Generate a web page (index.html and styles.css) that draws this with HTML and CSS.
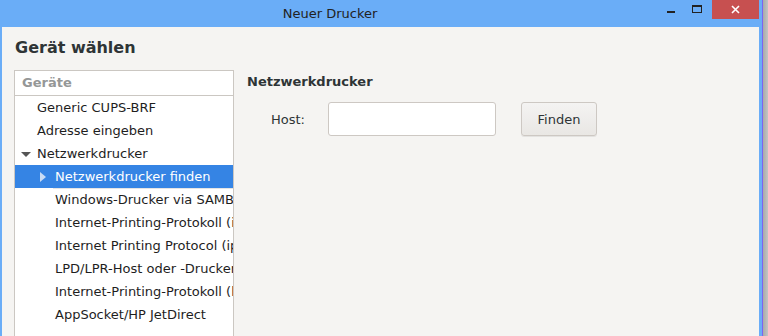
FILE: index.html
```html
<!DOCTYPE html>
<html lang="de">
<head>
  <meta charset="UTF-8" />
  <title>Neuer Drucker</title>
  <link rel="stylesheet" href="styles.css">
</head>
<body>

<div class="window">
  <div class="titlebar">
    <div class="title">Neuer Drucker</div>
    <div class="wbtn min"><span class="dash"></span></div>
    <div class="wbtn max"><span class="box"></span></div>
    <div class="wbtn close">
      <svg width="9" height="9" viewBox="0 0 9 9">
        <path d="M1 1 L8 8 M8 1 L1 8" stroke="#fff" stroke-width="1.6" fill="none"/>
      </svg>
    </div>
  </div>

  <div class="content">
    <h2>Gerät wählen</h2>

    <div class="main">
      <div class="list">
        <div class="list-head">Geräte</div>
        <div class="row lvl1">Generic CUPS-BRF</div>
        <div class="row lvl1">Adresse eingeben</div>
        <div class="row lvl1"><span class="arrow-down"></span>Netzwerkdrucker</div>
        <div class="row lvl2 selected"><span class="arrow-right"></span>Netzwerkdrucker finden</div>
        <div class="row lvl2">Windows-Drucker via SAMBA</div>
        <div class="row lvl2">Internet-Printing-Protokoll (ipps)</div>
        <div class="row lvl2">Internet Printing Protocol (ipp)</div>
        <div class="row lvl2">LPD/LPR-Host oder -Drucker</div>
        <div class="row lvl2">Internet-Printing-Protokoll (https)</div>
        <div class="row lvl2">AppSocket/HP JetDirect</div>
      </div>

      <div class="panel">
        <div class="panel-title">Netzwerkdrucker</div>
        <div class="host-row">
          <label for="host">Host:</label>
          <input type="text" id="host">
          <button>Finden</button>
        </div>
      </div>
    </div>
  </div>
</div>
<div class="edge"></div>
<div class="shade"></div>

</body>
</html>
```

FILE: styles.css
```css
body {
  margin: 0;
  height: 336px;
  overflow: hidden;
  display: flex;
  font-family: "DejaVu Sans", sans-serif;
  font-size: 13px;
  color: #2e3436;
}
.window {
  width: 757px;
  height: 336px;
  padding: 0 3px 0 2px;
  background: #6aadf7;
  display: flex;
  flex-direction: column;
}
.edge {
  width: 1px;
  background: #7b63f2;
}
.shade {
  flex: 1;
  background: linear-gradient(to right, #a9a9a9, #c4c4c4);
}
.titlebar {
  height: 27px;
  display: flex;
  margin-left: -2px;
}
.title {
  flex: 1;
  text-align: center;
  line-height: 27px;
  color: #222;
}
.wbtn {
  display: flex;
  justify-content: center;
}
.min {
  width: 22px;
}
.dash {
  width: 8px;
  height: 2px;
  margin-top: 11px;
  background: #222;
}
.max {
  width: 30px;
}
.box {
  width: 8px;
  height: 5px;
  margin-top: 5px;
  border: 1px solid #222;
  border-top-width: 2px;
}
.close {
  width: 47px;
  height: 19px;
  background: #c75050;
  align-items: center;
}
.content {
  flex: 1;
  min-height: 0;
  overflow: hidden;
  background: #f5f4f2;
  padding: 11px 12px 0 12px;
}
h2 {
  margin: 0 0 12px 1px;
  font-size: 16px;
  line-height: 20px;
  font-weight: bold;
  color: #2e3436;
}
.main {
  display: flex;
}
.list {
  width: 218px;
  height: 266px;
  border: 1px solid #cbc7c2;
  border-bottom: none;
  background: #fff;
  overflow: hidden;
  color: #1e1e1e;
}
.list-head {
  height: 24px;
  line-height: 24px;
  padding-left: 7px;
  border-bottom: 1px solid #cbc7c2;
  color: #959797;
  font-weight: bold;
}
.row {
  height: 23px;
  line-height: 23px;
  white-space: nowrap;
  position: relative;
}
.lvl1 {
  padding-left: 22px;
}
.lvl2 {
  padding-left: 40px;
}
.selected {
  background: #3584e4;
  color: #fff;
}
.selected::after {
  content: "";
  position: absolute;
  left: 38px;
  right: 0;
  bottom: -1px;
  height: 1px;
  background: #e4e4e4;
}
.arrow-down {
  position: absolute;
  left: 6px;
  top: 10px;
  border-left: 5px solid transparent;
  border-right: 5px solid transparent;
  border-top: 5px solid #555;
}
.arrow-right {
  position: absolute;
  left: 25px;
  top: 7px;
  border-top: 5px solid transparent;
  border-bottom: 5px solid transparent;
  border-left: 6px solid #c9dcf5;
}
.panel {
  flex: 1;
  padding: 2px 0 0 13px;
}
.panel-title {
  font-weight: bold;
  line-height: 20px;
}
.host-row {
  display: flex;
  align-items: center;
  margin-top: 10px;
  padding-left: 24px;
}
label {
  width: 57px;
}
input {
  box-sizing: border-box;
  width: 168px;
  height: 34px;
  border: 1px solid #cdc8c3;
  border-radius: 3px;
  background: #fff;
}
button {
  box-sizing: border-box;
  width: 76px;
  height: 34px;
  margin-left: 25px;
  border: 1px solid #cdc8c3;
  border-radius: 3px;
  background: linear-gradient(#f4f3f2, #e9e7e4);
  box-shadow: 0 1px 0 rgba(0,0,0,0.07);
  font-family: "DejaVu Sans", sans-serif;
  font-size: 13px;
  color: #2e3436;
}
```
